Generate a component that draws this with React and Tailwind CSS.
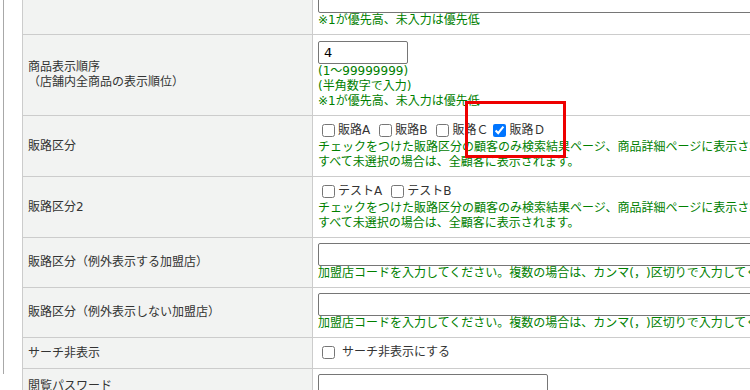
import React from 'react'

const GREEN = 'text-[#008000]'

function Check({ label, checked, gap = 'mr-[3px]', after = 'mr-[5px]' }) {
  return (
    <label className={`inline-flex items-center ${after}`}>
      <input type="checkbox" defaultChecked={checked} className={`m-0 ml-[4px] w-[13px] h-[13px] ${gap}`} />
      <span>{label}</span>
    </label>
  )
}

function Row({ label, top = 'pt-[5px]', children }) {
  return (
    <tr>
      <td className="border border-[#cccccc] bg-[#f2f3f2] px-[5px] align-middle">{label}</td>
      <td className={`border border-[#cccccc] bg-white px-[5px] ${top} pb-[6px] whitespace-nowrap align-top`}>{children}</td>
    </tr>
  )
}

export default function App() {
  return (
    <div className="relative w-[750px] h-[390px] overflow-hidden bg-white text-[12px] leading-[15px] text-[#333333] [text-spacing-trim:space-all] font-['DejaVu_Sans','Noto_Sans_CJK_JP',sans-serif]">
      <div className="ml-[3px] h-full border-l border-[#a8a8a8] pl-[18px]">
        <div className="-mt-[16px]">
          <table className="border-collapse table-fixed w-[1000px]">
            <colgroup>
              <col className="w-[290px]" />
              <col className="w-[710px]" />
            </colgroup>
            <tbody>
              <Row label="">
                <div className="w-[560px] h-[23px] border border-[#767676] rounded-[2px]" />
                <div className={GREEN}>※1が優先高、未入力は優先低</div>
              </Row>
              <Row label={<>商品表示順序<br />（店舗内全商品の表示順位）</>} top="pt-[6px]">
                <div className="flex items-center w-[90px] h-[23px] border border-[#767676] rounded-[2px] px-[5px] text-[13px] text-black">4</div>
                <div className={GREEN}>(1～99999999)</div>
                <div className={GREEN}>(半角数字で入力)</div>
                <div className={GREEN}>※1が優先高、未入力は優先低</div>
              </Row>
              <Row label="販路区分">
                <div className="flex items-center h-[19px]">
                  <Check label="販路A" />
                  <Check label="販路B" />
                  <Check label="販路Ｃ" after="mr-[1px]" />
                  <Check label="販路Ｄ" checked />
                </div>
                <div className={GREEN}>チェックをつけた販路区分の顧客のみ検索結果ページ、商品詳細ページに表示されます。</div>
                <div className={GREEN}>すべて未選択の場合は、全顧客に表示されます。</div>
              </Row>
              <Row label="販路区分2">
                <div className="flex items-center h-[19px]">
                  <Check label="テストA" />
                  <Check label="テストB" />
                </div>
                <div className={GREEN}>チェックをつけた販路区分の顧客のみ検索結果ページ、商品詳細ページに表示されます。</div>
                <div className={GREEN}>すべて未選択の場合は、全顧客に表示されます。</div>
              </Row>
              <Row label="販路区分（例外表示する加盟店）">
                <div className="w-[560px] h-[23px] border border-[#767676] rounded-[2px]" />
                <div className={GREEN}>加盟店コードを入力してください。複数の場合は、カンマ(，)区切りで入力してください。</div>
              </Row>
              <Row label="販路区分（例外表示しない加盟店）">
                <div className="w-[560px] h-[23px] border border-[#767676] rounded-[2px]" />
                <div className={GREEN}>加盟店コードを入力してください。複数の場合は、カンマ(，)区切りで入力してください。</div>
              </Row>
              <Row label="サーチ非表示">
                <div className="flex items-center h-[19px]">
                  <Check label="サーチ非表示にする" gap="mr-[7px]" />
                </div>
              </Row>
              <Row label="閲覧パスワード">
                <div className="w-[230px] h-[23px] border border-[#767676] rounded-[2px]" />
              </Row>
            </tbody>
          </table>
        </div>
      </div>
      {/* highlight box */}
      <div className="absolute left-[465px] top-[101px] w-[101px] h-[57px] border-[3px] border-[#ee0000]" />
    </div>
  )
}
